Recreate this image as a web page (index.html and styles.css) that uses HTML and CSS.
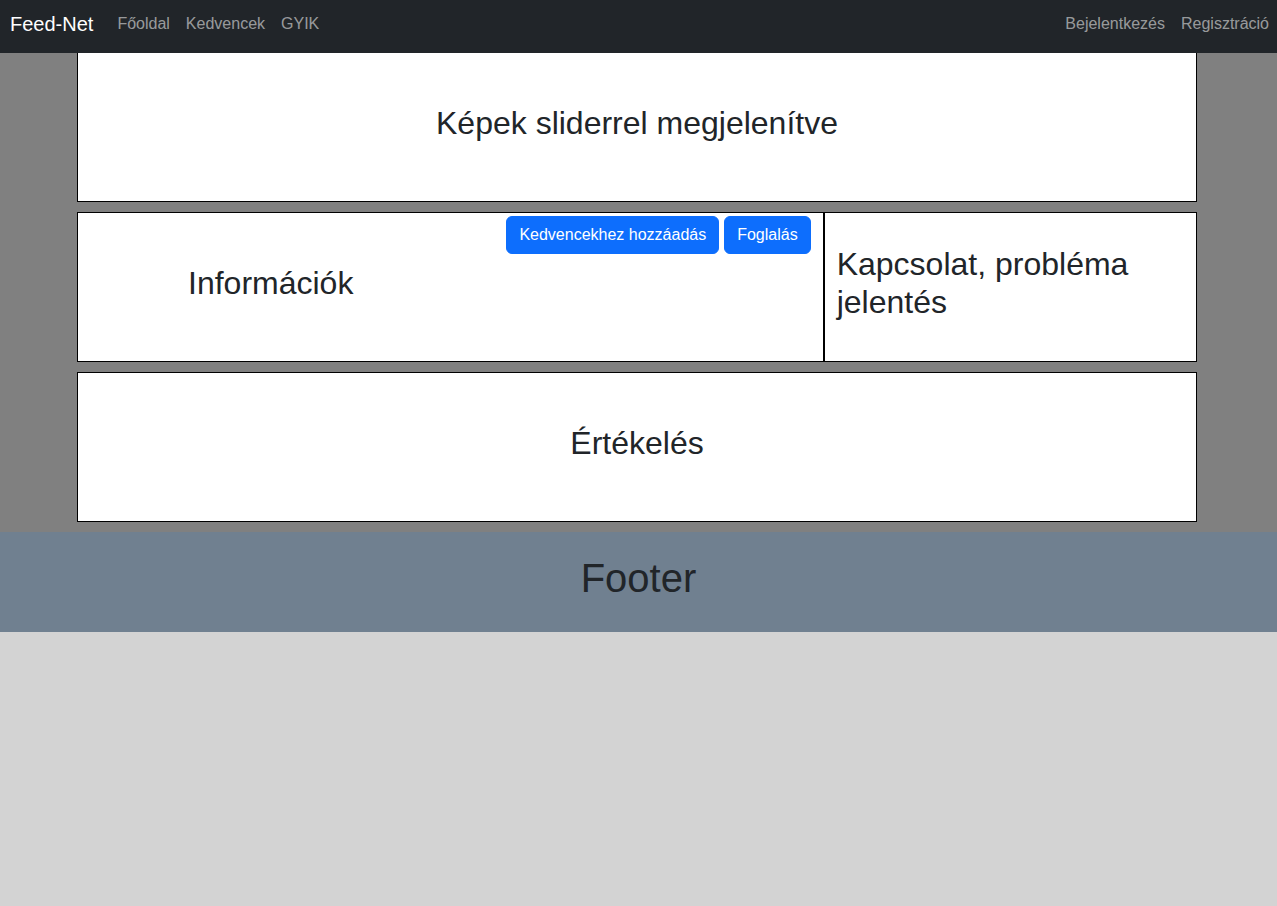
FILE: index.html
```html
<!DOCTYPE html>
<html lang="hu">
<head>
<meta charset="utf-8">
<title>Feed-Net</title>
<link rel="stylesheet" href="styles.css">
</head>
<body>
<nav class="navbar">
  <a class="brand" href="#">Feed-Net</a>
  <ul class="nav-left">
    <li><a class="nav-link" href="#">Főoldal</a></li>
    <li><a class="nav-link" href="#">Kedvencek</a></li>
    <li><a class="nav-link" href="#">GYIK</a></li>
  </ul>
  <ul class="nav-right">
    <li><a class="nav-link" href="#">Bejelentkezés</a></li>
    <li><a class="nav-link" href="#">Regisztráció</a></li>
  </ul>
</nav>
<main class="page">
  <section class="box box-center box-first">
    <h2 class="title">Képek sliderrel megjelenítve</h2>
  </section>
  <div class="row">
    <section class="box info">
      <h2 class="title info-title">Információk</h2>
      <div class="actions">
        <button class="btn">Kedvencekhez hozzáadás</button>
        <button class="btn">Foglalás</button>
      </div>
    </section>
    <section class="box contact">
      <h2 class="title">Kapcsolat, probléma jelentés</h2>
    </section>
  </div>
  <section class="box box-center">
    <h2 class="title">Értékelés</h2>
  </section>
</main>
<footer class="footer">
  <h1 class="footer-title">Footer</h1>
</footer>
</body>
</html>
```

FILE: styles.css
```css
* { box-sizing: border-box; }
html, body { margin: 0; padding: 0; }
body {
  background: #d3d3d3;
  font-family: "Liberation Sans", Arial, sans-serif;
  font-size: 16px;
  line-height: 1.5;
  color: #212529;
}
.navbar {
  height: 53px;
  background: #212529;
  display: flex;
  align-items: center;
  padding: 0 0 5px 10px;
}
.brand {
  color: #fff;
  font-size: 20px;
  line-height: 30px;
  text-decoration: none;
  margin-right: 16px;
}
.nav-left, .nav-right {
  list-style: none;
  margin: 0;
  padding: 0;
  display: flex;
}
.nav-right { margin-left: auto; }
.nav-link {
  display: block;
  padding: 0 8px;
  line-height: 24px;
  color: rgba(255, 255, 255, 0.55);
  text-decoration: none;
}
.page {
  background: #808080;
  padding: 0 80px 10px 77px;
}
.box {
  background: #fff;
  border: 1px solid #000;
  height: 150px;
  margin-bottom: 10px;
}
.box-first {
  border-top: none;
  height: 149px;
  padding-top: 1px;
}
.page > .box:last-child { margin-bottom: 0; }
.box-center {
  display: flex;
  align-items: center;
  justify-content: center;
}
.title {
  margin: 0 0 8px;
  font-size: 32px;
  font-weight: 400;
  line-height: 1.2;
}
.row {
  display: grid;
  grid-template-columns: 2fr 1fr;
  margin-bottom: 10px;
}
.row .box { margin-bottom: 0; }
.info {
  display: flex;
  align-items: center;
  padding: 0 12px 0 110px;
}
.actions {
  align-self: flex-start;
  margin-left: auto;
  margin-top: 3px;
  display: flex;
  gap: 5px;
}
.btn {
  font-family: inherit;
  font-size: 16px;
  line-height: 24px;
  padding: 6px 12px;
  color: #fff;
  background: #0d6efd;
  border: 1px solid #0d6efd;
  border-radius: 6px;
}
.contact {
  display: flex;
  align-items: center;
  padding: 0 12px;
}
.footer {
  background: #708090;
  height: 100px;
  display: flex;
  align-items: center;
  justify-content: center;
}
.footer-title {
  margin: 0 0 8px;
  font-size: 40px;
  font-weight: 400;
  line-height: 1.2;
}
```
